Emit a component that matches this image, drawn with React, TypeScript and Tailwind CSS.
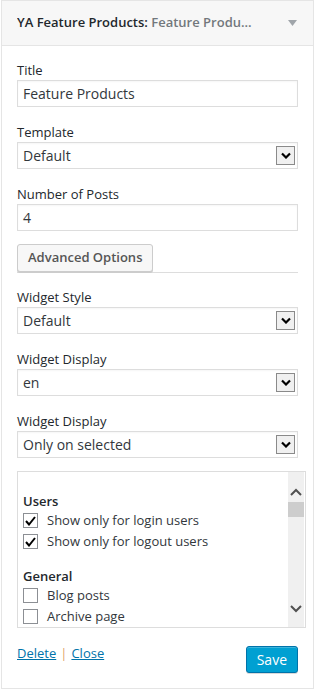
import React from 'react';

const font = { fontFamily: '"Open Sans", "Noto Sans", Arial, sans-serif' };

const SelectArrow = () => (
  <span className="flex h-[19px] w-[19px] items-center justify-center border border-[#8a8a8a] bg-[#f0f0f0]">
    <svg width="10" height="7" viewBox="0 0 10 7">
      <path d="M1 1.5 L5 5.5 L9 1.5" fill="none" stroke="#000" strokeWidth="2.2" />
    </svg>
  </span>
);

const Field: React.FC<{ label: string; value: string; select?: boolean; className?: string }> = ({
  label,
  value,
  select,
  className = 'mb-[16px]',
}) => (
  <div className={className}>
    <div className="mb-px h-[18px] text-[13px] leading-[18px] text-[#23282d]">{label}</div>
    <div className="flex h-[27px] items-center justify-between border border-[#dddddd] bg-white pl-[5px] pr-[2px] text-[14px] text-[#32373c] shadow-[inset_0_1px_2px_rgba(0,0,0,0.04)]">
      <span>{value}</span>
      {select && <SelectArrow />}
    </div>
  </div>
);

const Checkbox: React.FC<{ checked?: boolean; label: string }> = ({ checked, label }) => (
  <div className="flex h-[21px] items-center">
    <span className="flex h-[15px] w-[15px] items-center justify-center border border-[#8c8f94] bg-white">
      {checked && (
        <svg width="11" height="10" viewBox="0 0 11 10">
          <path d="M1 5 L4 8.5 L10 1" fill="none" stroke="#000" strokeWidth="2" />
        </svg>
      )}
    </span>
    <span className="ml-[9px] text-[13px] text-[#32373c]">{label}</span>
  </div>
);

export default function App() {
  return (
    <div className="h-[690px] w-[316px] bg-white pl-px" style={font}>
      <div className="h-[689px] w-[313px] border border-[#e5e5e5] bg-white">
        {/* Header */}
        <div className="flex h-[45px] items-center justify-between border-b border-[#e5e5e5] bg-[#f7f7f7] pl-[15px] pr-[16px]">
          <div className="truncate text-[13px] font-semibold text-[#23282d]">
            YA Feature Products: <span className="text-[#72777c]">Feature Produ...</span>
          </div>
          <svg width="9" height="6" viewBox="0 0 9 6" className="ml-8 shrink-0">
            <path d="M0 0 L9 0 L4.5 6 Z" fill="#a0a5aa" />
          </svg>
        </div>

        {/* Form */}
        <div className="px-[15px] pt-[15px]">
          <Field label="Title" value="Feature Products" />
          <Field label="Template" value="Default" select />
          <Field label="Number of Posts" value="4" className="mb-[13px]" />

          <button className="h-[28px] rounded-[3px] border border-[#cccccc] bg-[#f7f7f7] px-[10px] text-[13px] font-semibold text-[#555555] shadow-[0_1px_0_#cccccc]">
            Advanced Options
          </button>
          <div className="mb-[15px] border-t border-[#dddddd]" />

          <Field label="Widget Style" value="Default" select />
          <Field label="Widget Display" value="en" select />
          <Field label="Widget Display" value="Only on selected" select className="mb-[13px]" />

          {/* Checklist */}
          <div className="-mr-[8px] flex h-[157px] border border-[#dddddd] bg-white">
            <div className="flex-1 overflow-hidden pl-[5px] pt-[20px]">
              <div className="h-[18px] text-[13px] font-semibold leading-[18px] text-[#23282d]">Users</div>
              <Checkbox checked label="Show only for login users" />
              <Checkbox checked label="Show only for logout users" />
              <div className="mt-[15px] h-[18px] text-[13px] font-semibold leading-[18px] text-[#23282d]">General</div>
              <Checkbox label="Blog posts" />
              <Checkbox label="Archive page" />
            </div>
            <div className="mr-px flex w-[16px] flex-col items-center bg-[#f0f0f0] pt-[16px] pb-[14px]">
              <svg width="12" height="8" viewBox="0 0 12 8">
                <path d="M1 7 L6 2 L11 7" fill="none" stroke="#505050" strokeWidth="2" />
              </svg>
              <div className="mt-[6px] h-[15px] w-[16px] bg-[#cdcdcd]" />
              <div className="flex-1" />
              <svg width="12" height="8" viewBox="0 0 12 8">
                <path d="M1 1 L6 6 L11 1" fill="none" stroke="#505050" strokeWidth="2" />
              </svg>
            </div>
          </div>

          {/* Footer */}
          <div className="mt-[16px] flex items-start justify-between">
            <div className="text-[13px] leading-[18px]">
              <a href="#" className="text-[#0073aa] underline">Delete</a>
              <span className="mx-[4px] text-[#e0a56a]">|</span>
              <a href="#" className="text-[#0073aa] underline">Close</a>
            </div>
            <button className="mt-[2px] h-[27px] rounded-[3px] border border-[#0073aa] bg-[#00a0d2] px-[10px] text-[14px] leading-none text-white shadow-[inset_0_1px_0_rgba(120,200,230,0.5),0_1px_0_rgba(0,0,0,0.15)]">
              Save
            </button>
          </div>
        </div>
      </div>
    </div>
  );
}
